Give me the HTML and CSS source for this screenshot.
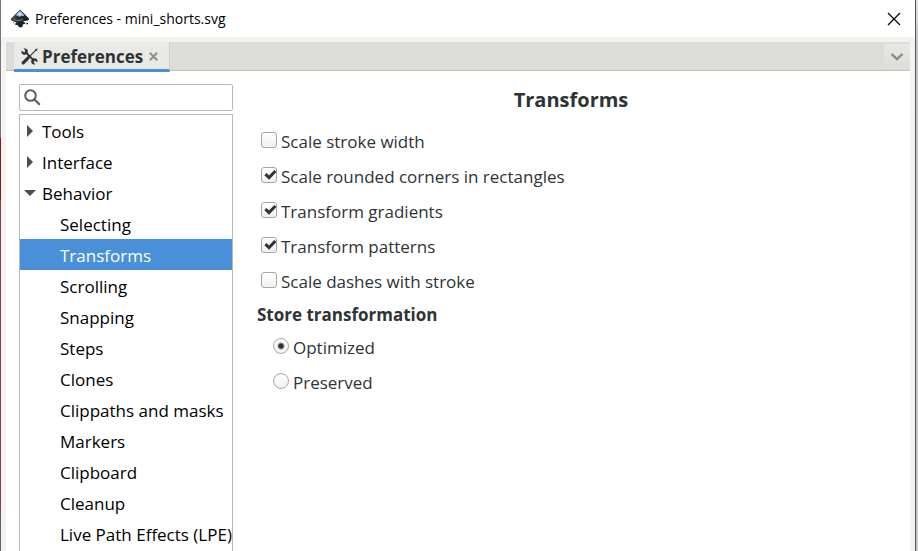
FILE: index.html
```
<!DOCTYPE html>
<html lang="en">
<head>
    <meta charset="UTF-8">
    <meta name="viewport" content="width=device-width, initial-scale=1.0">
    <title>Preferences - mini_shorts.svg</title>
    <link rel="stylesheet" href="styles.css">
</head>
<body>
    <div class="desktop-left"></div>
    <div class="window">
        <header class="titlebar">
            <svg class="app-icon" width="20" height="20" viewBox="0 0 20 20">
                <defs>
                    <linearGradient id="ink" x1="0" y1="0" x2="1" y2="1">
                        <stop offset="0" stop-color="#8a929a"/>
                        <stop offset="0.4" stop-color="#2c323a"/>
                        <stop offset="1" stop-color="#0c0e12"/>
                    </linearGradient>
                </defs>
                <path d="M10 0.5 L19 9.5 Q19.6 11 17.5 11.4 L13.5 12.2 Q12.6 13 15 13.6 Q16.4 14.4 14.6 15 L12.6 15.4 Q13.4 17.6 11 18.6 Q8.4 18.4 8 16.6 L5 15.4 Q3.8 14.6 6 14.2 L6.4 13.4 L2 11.8 Q0 11 1 9.4 Z" fill="url(#ink)"/>
                <path d="M10 2 L14.2 6.2 L12.6 7.2 L11.2 6.2 L9.8 8 L8.2 6.4 L6 6.6 L6.8 5.2 Z" fill="#c3d8f0"/>
                <path d="M3.4 10.4 Q8 12.8 13 10.6" fill="none" stroke="#7388a3" stroke-width="1"/>
                <path d="M16 14.6 L18.2 13.6 L18 15 L16.4 15.6 Z M2.6 13.4 L4 13.4 L3.6 14.4 Z" fill="#15181c"/>
            </svg>
            <span class="window-title">Preferences - mini_shorts.svg</span>
            <button class="window-close" aria-label="Close window">
                <svg width="14" height="14" viewBox="0 0 14 14"><path d="M1 1 L13 13 M13 1 L1 13" stroke="#000" stroke-width="1.2"/></svg>
            </button>
        </header>

        <div class="frame">
            <nav class="tabs">
                <div class="tab">
                    <svg width="17" height="17" viewBox="0 0 17 17">
                        <path d="M5 4.6 L13 12.6" stroke="#2e3436" stroke-width="2"/>
                        <path d="M2.6 0.6 L4.4 2.8 L3.2 4.4 L0.6 2.6 Q0 5.2 1.6 6.2 Q3.2 7.2 5 6.4 L6.6 5 Q7.4 3 6.2 1.6 Q4.6 0 2.6 0.6 Z" fill="#2e3436"/>
                        <path d="M14.4 16.4 L12.6 14.2 L13.8 12.6 L16.4 14.4 Q17 11.8 15.4 10.8 Q13.8 9.8 12 10.6 L10.4 12 Q9.6 14 10.8 15.4 Q12.4 17 14.4 16.4 Z" fill="#2e3436"/>
                        <path d="M15.6 1.4 L8.6 8.4" stroke="#2e3436" stroke-width="1.2"/>
                        <path d="M13.8 1.8 L16 0.4 L16.6 1 L15.2 3.2 Z" fill="#2e3436"/>
                        <path d="M7.2 9.8 L2.2 14.8" stroke="#2e3436" stroke-width="3.2" stroke-linecap="round"/>
                    </svg>
                    <span>Preferences</span>
                    <button class="tab-close" aria-label="Close tab">
                        <svg width="9" height="9" viewBox="0 0 9 9"><path d="M0.8 0.8 L8.2 8.2 M8.2 0.8 L0.8 8.2" stroke="#8d9091" stroke-width="2"/></svg>
                    </button>
                </div>
                <button class="tab-menu" aria-label="Tab menu">
                    <svg width="14" height="8" viewBox="0 0 14 8"><path d="M1.5 1 L7 6.2 L12.5 1" fill="none" stroke="#888a85" stroke-width="2.4"/></svg>
                </button>
            </nav>

            <main class="panel">
                <aside class="sidebar">
                    <div class="search">
                        <svg width="17" height="17" viewBox="0 0 17 17"><circle cx="6.5" cy="6.5" r="5.3" fill="none" stroke="#5a5f60" stroke-width="2"/><path d="M10.5 10.5 L15.8 15.8" stroke="#5a5f60" stroke-width="2.2"/></svg>
                        <input type="text" aria-label="Search preferences">
                    </div>
                    <ul class="tree">
                        <li><svg class="arrow" width="12" height="12" viewBox="0 0 12 12"><path d="M3 0 L9 6 L3 12 Z"/></svg><a href="#">Tools</a></li>
                        <li><svg class="arrow" width="12" height="12" viewBox="0 0 12 12"><path d="M3 0 L9 6 L3 12 Z"/></svg><a href="#">Interface</a></li>
                        <li><svg class="arrow" width="12" height="12" viewBox="0 0 12 12"><path d="M0 3 L12 3 L6 9 Z"/></svg><a href="#">Behavior</a></li>
                        <li class="child"><a href="#">Selecting</a></li>
                        <li class="child selected"><a href="#">Transforms</a></li>
                        <li class="child"><a href="#">Scrolling</a></li>
                        <li class="child"><a href="#">Snapping</a></li>
                        <li class="child"><a href="#">Steps</a></li>
                        <li class="child"><a href="#">Clones</a></li>
                        <li class="child"><a href="#">Clippaths and masks</a></li>
                        <li class="child"><a href="#">Markers</a></li>
                        <li class="child"><a href="#">Clipboard</a></li>
                        <li class="child"><a href="#">Cleanup</a></li>
                        <li class="child"><a href="#">Live Path Effects (LPE)</a></li>
                    </ul>
                </aside>

                <section class="content">
                    <h1>Transforms</h1>
                    <div class="options">
                        <label><input type="checkbox">Scale stroke width</label>
                        <label><input type="checkbox" checked>Scale rounded corners in rectangles</label>
                        <label><input type="checkbox" checked>Transform gradients</label>
                        <label><input type="checkbox" checked>Transform patterns</label>
                        <label><input type="checkbox">Scale dashes with stroke</label>
                    </div>
                    <h2>Store transformation</h2>
                    <div class="options radios">
                        <label><input type="radio" name="store" checked>Optimized</label>
                        <label><input type="radio" name="store">Preserved</label>
                    </div>
                </section>
            </main>
        </div>
    </div>
    <div class="desktop-right"></div>
</body>
</html>
```
FILE: styles.css
```
* {
    box-sizing: border-box;
}

body {
    display: flex;
    height: 100vh;
    margin: 0;
    overflow: hidden;
    font-family: "Open Sans", "Noto Sans", sans-serif;
    font-size: 17px;
    color: #2e3436;
}

button {
    display: flex;
    align-items: center;
    justify-content: center;
    padding: 0;
    border: none;
    background: none;
}

.window {
    flex: 1;
    display: flex;
    flex-direction: column;
    border-right: 1px solid #555;
    background-color: #f4f3f1;
}

/* Strips of the window behind this one */
.desktop-left {
    width: 1px;
    background: linear-gradient(#777 138px, #7a1c20 138px, #7a1c20 200px, #70484a 200px, #70484a 500px, #666 530px);
}

.desktop-right {
    width: 2px;
    background: linear-gradient(#e4e4e4 0, #c4c4c4 45px, #c8c8c8 100%);
}

.titlebar {
    display: flex;
    align-items: center;
    height: 37px;
    padding: 0 14px 0 9px;
    background-color: white;
    color: black;
    font-size: 14px;
}

.window-title {
    flex: 1;
    margin-left: 5px;
}

.frame {
    flex: 1;
    display: flex;
    flex-direction: column;
    min-height: 0;
    padding: 5px 5px 0;
}

.tabs {
    z-index: 1;
    display: flex;
    justify-content: space-between;
    height: 29px;
    padding-left: 8px;
    border-bottom: 1px solid #c0c0bb;
    background-color: #dcddd8;
}

.tab {
    display: flex;
    align-items: center;
    height: 30px;
    padding: 1px 11px 0 7px;
    border-right: 1px solid #cfcfca;
    border-bottom: 3px solid #4a90d9;
    background-color: #e9e9e6;
    font-weight: bold;
}

.tab span {
    margin: 0 6px 0 4px;
}

.tab-menu {
    width: 26px;
    height: 26px;
    margin-top: 2px;
    border-radius: 3px 0 0 0;
    background: linear-gradient(#e9e9e6, #dcddd8);
}

.panel {
    flex: 1;
    display: flex;
    gap: 12px;
    min-height: 0;
    padding: 13px 13px 0;
    background-color: white;
}

.sidebar {
    display: flex;
    flex-direction: column;
    gap: 3px;
    width: 214px;
}

.search {
    display: flex;
    align-items: center;
    height: 27px;
    padding: 0 4px;
    border: 1px solid #b9b9b4;
    border-radius: 2px;
}

.search input {
    flex: 1;
    min-width: 0;
    border: none;
    outline: none;
    font: inherit;
}

.tree {
    flex: 1;
    margin: 0;
    padding: 0;
    border: 1px solid #b9b9b4;
    border-bottom: none;
    list-style: none;
    overflow: hidden;
}

.tree li {
    display: flex;
    align-items: center;
    gap: 6px;
    height: 31px;
    padding: 1px 0 0 4px;
    white-space: nowrap;
}

.tree .child {
    padding-left: 40px;
}

.tree a {
    color: black;
    text-decoration: none;
}

.tree .selected {
    background-color: #4a90d9;
}

.tree .selected a {
    color: white;
}

.arrow {
    fill: #4d4d4d;
}

.content {
    flex: 1;
}

h1 {
    margin: 0;
    font-size: 20px;
    line-height: 32px;
    text-align: center;
}

h2 {
    margin: 0 0 0 12px;
    font-size: 17px;
    line-height: 31px;
}

.options {
    padding: 8px 0 0 16px;
}

.radios {
    padding: 0 0 0 28px;
}

.options label {
    display: flex;
    align-items: center;
    gap: 4px;
    height: 35px;
}

.options input {
    appearance: none;
    width: 16px;
    height: 16px;
    margin: 0 0 3px;
    border: 1px solid #a8a8a2;
    border-radius: 3px;
    background: linear-gradient(white, #f0f0ee);
}

.options input[type="radio"] {
    border-radius: 50%;
}

.options input[type="checkbox"]:checked {
    background: url("data:image/svg+xml,%3Csvg xmlns='http://www.w3.org/2000/svg' viewBox='0 0 14 14'%3E%3Cpath d='M3.4 6.2 L7 9.6 L13.4 3' fill='none' stroke='%232e3436' stroke-width='3'/%3E%3C/svg%3E") center no-repeat, linear-gradient(white, #f0f0ee);
}

.options input[type="radio"]:checked {
    background: radial-gradient(circle, #2e3436 2px, transparent 4px), linear-gradient(white, #f0f0ee);
}
```
